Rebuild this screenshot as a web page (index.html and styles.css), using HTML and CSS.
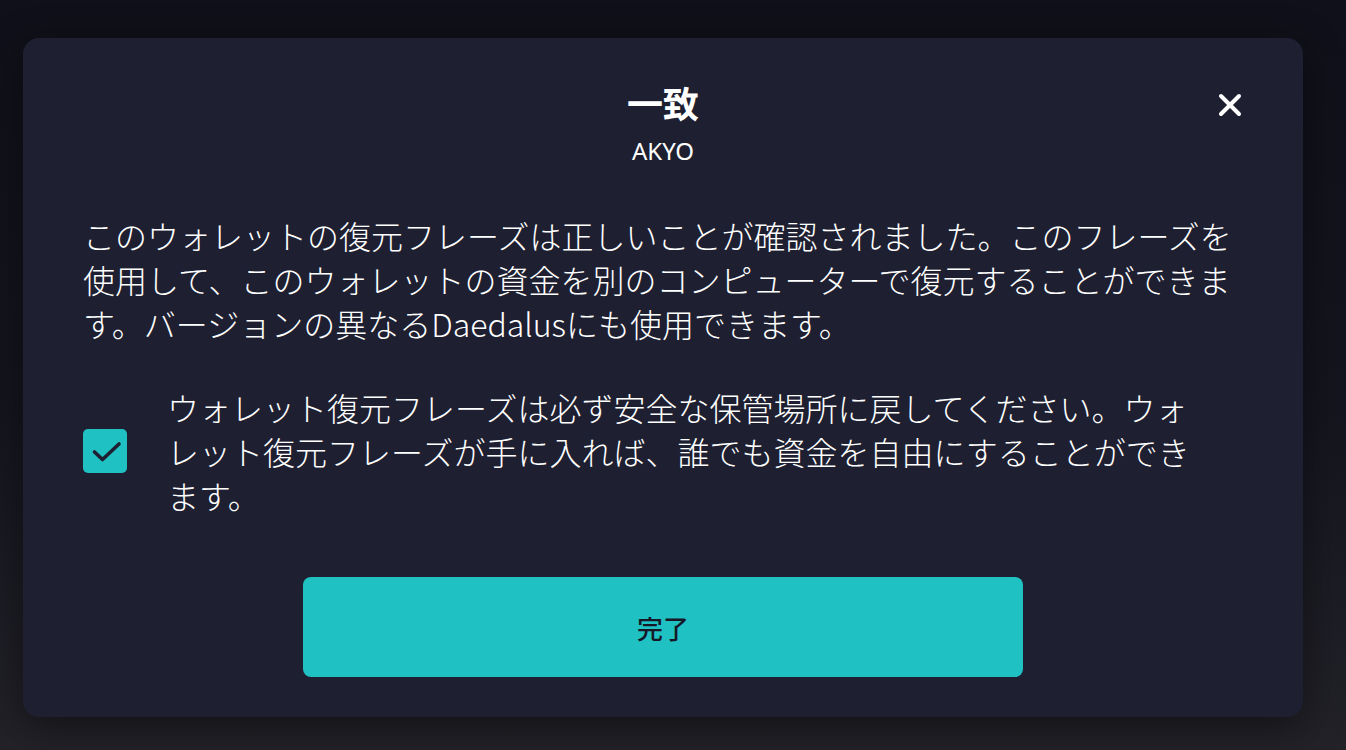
FILE: index.html
```html
<!DOCTYPE html>
<html lang="ja">
<head>
    <meta charset="UTF-8">
    <meta name="viewport" content="width=device-width, initial-scale=1.0">
    <title>一致</title>
    <link rel="stylesheet" href="styles.css">
</head>
<body>
    <div class="backdrop">
        <div class="dialog">
            <button class="close-btn" aria-label="close">
                <svg width="24" height="24" viewBox="0 0 24 24">
                    <path d="M3 3 L21 21 M21 3 L3 21" stroke="#fff" stroke-width="4" stroke-linecap="round"/>
                </svg>
            </button>

            <div class="dialog-header">
                <h1 class="dialog-title">一致</h1>
                <div class="wallet-name">AKYO</div>
            </div>

            <p class="dialog-text">このウォレットの復元フレーズは正しいことが確認されました。このフレーズを使用して、このウォレットの資金を別のコンピューターで復元することができます。バージョンの異なるDaedalusにも使用できます。</p>

            <label class="confirm-row">
                <span class="checkbox checked">
                    <svg width="44" height="44" viewBox="0 0 44 44">
                        <path d="M11.5 23 L19.5 30.5 L36 15" fill="none" stroke="#1e1f31" stroke-width="3.6" stroke-linecap="round" stroke-linejoin="round"/>
                    </svg>
                </span>
                <span class="confirm-text">ウォレット復元フレーズは必ず安全な保管場所に戻してください。ウォレット復元フレーズが手に入れば、誰でも資金を自由にすることができます。</span>
            </label>

            <div class="actions">
                <button class="primary-btn">完了</button>
            </div>
        </div>
    </div>
</body>
</html>
```

FILE: styles.css
```css
* {
    box-sizing: border-box;
}
body {
    margin: 0;
    height: 750px;
    overflow: hidden;
    font-family: "Noto Sans CJK JP", "Noto Sans", sans-serif;
    background: linear-gradient(180deg, #10101a 0%, #15151f 55%, #222228 100%);
    color: #fff;
}
.backdrop {
    padding: 38px 43px 0 23px;
}
.dialog {
    position: relative;
    width: 1280px;
    height: 679px;
    padding: 44px 60px 40px;
    background-color: #1e1f31;
    border-radius: 16px;
    box-shadow: 0 10px 40px rgba(0, 0, 0, 0.45);
}
.close-btn {
    position: absolute;
    top: 55px;
    right: 61px;
    width: 24px;
    height: 24px;
    padding: 0;
    border: none;
    background: none;
    cursor: pointer;
}
.close-btn svg {
    display: block;
}
.dialog-header {
    text-align: center;
}
.dialog-title {
    margin: 0;
    font-size: 36px;
    line-height: 40px;
    font-weight: 700;
}
.wallet-name {
    margin-top: 14px;
    font-family: "Noto Sans", sans-serif;
    font-size: 24px;
    line-height: 30px;
}
.dialog-text {
    margin: 47px 0 0;
    font-size: 32px;
    line-height: 44px;
    font-weight: 200;
}
.confirm-row {
    display: flex;
    align-items: center;
    gap: 40px;
    margin-top: 40px;
    cursor: pointer;
}
.checkbox {
    flex: 0 0 44px;
    width: 44px;
    height: 44px;
    border-radius: 5px;
}
.checkbox svg {
    display: block;
}
.checkbox.checked {
    background-color: #1fc1c3;
}
.confirm-text {
    width: 1040px;
    font-size: 32px;
    line-height: 44px;
    font-weight: 200;
}
.actions {
    display: flex;
    justify-content: center;
    margin-top: 60px;
}
.primary-btn {
    width: 720px;
    height: 100px;
    border: none;
    border-radius: 8px;
    background-color: #20c1c3;
    color: #161827;
    font-family: "Noto Sans CJK JP", sans-serif;
    font-size: 26px;
    font-weight: 500;
    cursor: pointer;
}
```
